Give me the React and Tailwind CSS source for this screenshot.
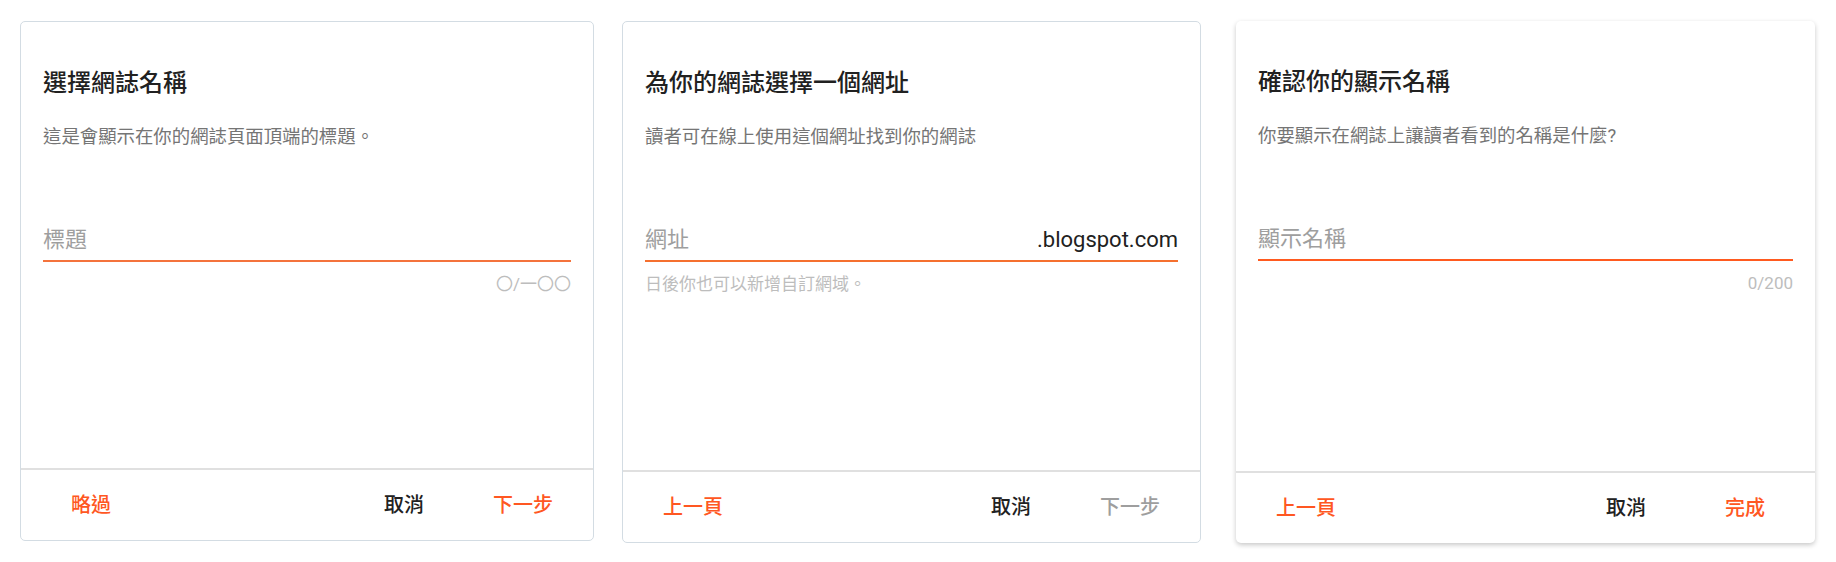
import React from "react"

const font = { fontFamily: 'Roboto, "Noto Sans CJK TC", "Noto Sans CJK SC", sans-serif' }

function FooterButton({ children, tone = "orange" }) {
  const color =
    tone === "orange" ? "text-[#ff5722]" : tone === "dark" ? "text-[#212121]" : "text-[#9e9e9e]"
  return (
    <button className={`min-w-[88px] h-[44px] px-2 text-[20px] leading-[44px] font-medium text-center ${color}`}>
      {children}
    </button>
  )
}

function Card({ title, subtitle, label, suffix, helper, counter, footerLeft, footerRight, className, underline }) {
  return (
    <div className={`flex flex-col bg-white rounded-[5px] shrink-0 ${className}`}>
      {/* Body */}
      <div className="flex-1 px-[22px] pt-[45px]">
        <h2 className="text-[24px] leading-[32px] font-medium text-[#212121]">{title}</h2>
        <p className="mt-[25px] text-[18.4px] leading-[26px] text-[#757575]">{subtitle}</p>
        <div className="mt-[75px]">
          <div className={`flex items-baseline justify-between pb-[5px] border-b-2 ${underline}`}>
            <span className="text-[22px] leading-[30px] text-[#9e9e9e]">{label}</span>
            {suffix && <span className="text-[22px] leading-[30px] text-[#212121]">{suffix}</span>}
          </div>
          {helper && <div className="mt-[11px] text-[17px] leading-[22px] text-[#bdbdbd]">{helper}</div>}
          {counter && (
            <div className="mt-[11px] text-right text-[17px] leading-[22px] text-[#bdbdbd]">{counter}</div>
          )}
        </div>
      </div>

      {/* Footer */}
      <div className="h-[72px] shrink-0 border-t-2 border-[#e0e0e0] flex items-center justify-between px-[26px]">
        <div>{footerLeft}</div>
        <div className="flex items-center gap-[31px]">{footerRight}</div>
      </div>
    </div>
  )
}

export default function App() {
  return (
    <div className="w-[1836px] h-[562px] bg-white flex items-start pl-[20px] pt-[21px]" style={font}>
      <Card
        className="w-[574px] h-[520px] border border-[#d3dce3]"
        underline="border-[#f4733c]"
        title="選擇網誌名稱"
        subtitle="這是會顯示在你的網誌頁面頂端的標題。"
        label="標題"
        counter="〇/一〇〇"
        footerLeft={<FooterButton>略過</FooterButton>}
        footerRight={
          <>
            <FooterButton tone="dark">取消</FooterButton>
            <FooterButton>下一步</FooterButton>
          </>
        }
      />
      <Card
        className="ml-[28px] w-[579px] h-[522px] border border-[#d3dce3]"
        underline="border-[#f5702f]"
        title="為你的網誌選擇一個網址"
        subtitle="讀者可在線上使用這個網址找到你的網誌"
        label="網址"
        suffix=".blogspot.com"
        helper="日後你也可以新增自訂網域。"
        footerLeft={<FooterButton>上一頁</FooterButton>}
        footerRight={
          <>
            <FooterButton tone="dark">取消</FooterButton>
            <FooterButton tone="grey">下一步</FooterButton>
          </>
        }
      />
      <Card
        className="ml-[35px] w-[579px] h-[522px] shadow-[0_2px_5px_rgba(0,0,0,0.22)]"
        underline="border-[#ff5a1f]"
        title="確認你的顯示名稱"
        subtitle="你要顯示在網誌上讓讀者看到的名稱是什麼?"
        label="顯示名稱"
        counter="0/200"
        footerLeft={<FooterButton>上一頁</FooterButton>}
        footerRight={
          <>
            <FooterButton tone="dark">取消</FooterButton>
            <FooterButton>完成</FooterButton>
          </>
        }
      />
    </div>
  )
}
